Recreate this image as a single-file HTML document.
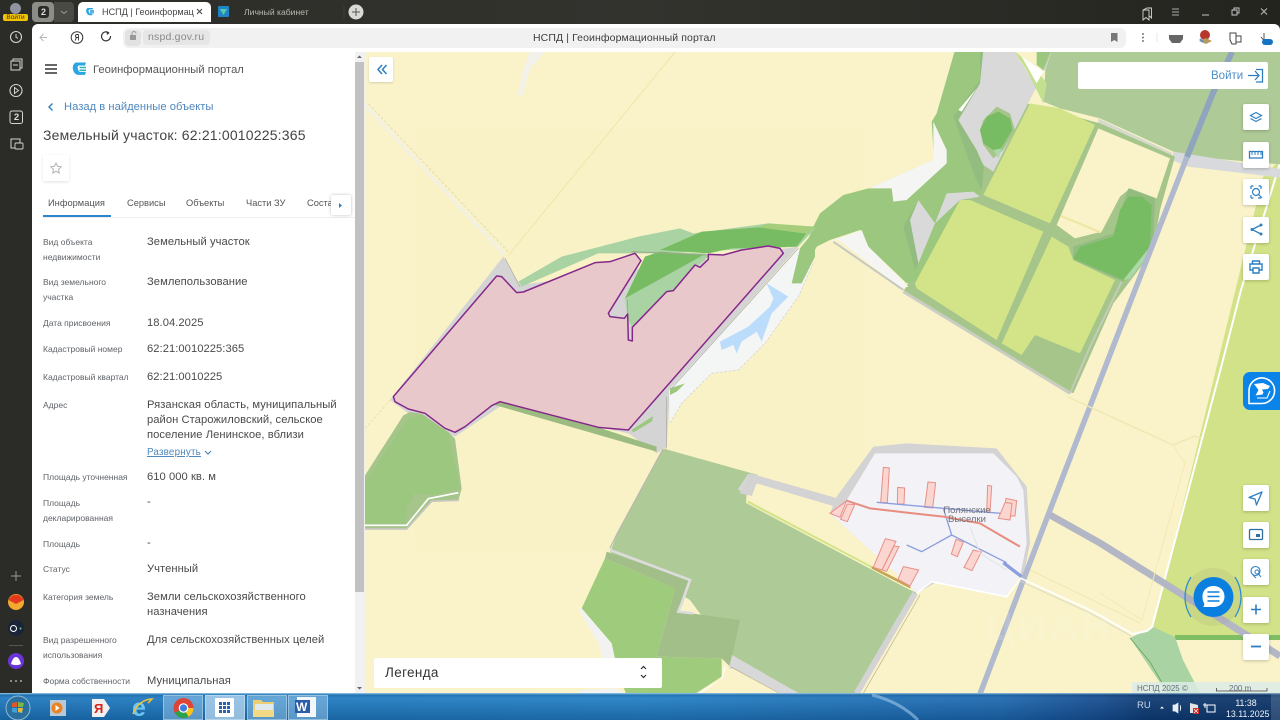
<!DOCTYPE html>
<html lang="ru"><head><meta charset="utf-8"><title>НСПД | Геоинформационный портал</title>
<style>
html,body{margin:0;padding:0;width:1280px;height:720px;overflow:hidden;background:#2b2b28}
body{font-family:"Liberation Sans","Noto Sans CJK SC",sans-serif;position:relative}
#w{position:absolute;left:0;top:0;width:1280px;height:720px;overflow:hidden;filter:blur(.35px)}
.a{position:absolute;white-space:nowrap}
.l{position:absolute;left:43px;font-size:8.5px;line-height:15px;color:#5f6368;letter-spacing:0;white-space:nowrap}
.v{position:absolute;left:147px;font-size:11.2px;line-height:15px;color:#4a4a4a;letter-spacing:.05px;white-space:nowrap}
.b{position:absolute;left:1243px;width:26px;height:26px;background:#fff;border-radius:2px;box-shadow:0 1px 3px rgba(0,0,0,.22)}
.t{position:absolute;font-size:9.3px;color:#555;white-space:nowrap}
svg{position:absolute;left:0;top:0;overflow:visible}
</style></head><body><div id="w">

<!-- window chrome -->
<div class="a" style="left:0;top:0;width:1280px;height:24px;background:linear-gradient(90deg,#2c2c28,#33332e 50%,#24241f)"></div>
<div class="a" style="left:0;top:0;width:32px;height:694px;background:#2b2b27"></div>
<div class="a" style="left:32px;top:2px;width:22px;height:20px;background:#8d8d88;border-radius:4px"></div>
<div class="a" style="left:54px;top:2px;width:20px;height:20px;background:#4a4a45;border-radius:0 4px 4px 0"></div>
<div class="a" style="left:38px;top:6px;width:11px;height:12px;background:#2b2b28;border-radius:3px;color:#ddd;font-size:9px;font-weight:bold;line-height:12px;text-align:center">2</div>
<div class="a" style="left:78px;top:2px;width:133px;height:20px;background:#fff;border-radius:5px 5px 0 0"></div>
<div class="a" style="left:102px;top:6px;width:92px;overflow:hidden;font-size:9.1px;line-height:12px;color:#444">НСПД | Геоинформаци</div>
<div class="a" style="left:244px;top:6px;font-size:8.6px;line-height:12px;color:#b9b9b2">Личный кабинет</div>
<div class="a" style="left:3px;top:14px;width:25px;height:7px;background:#f2c300;border-radius:2px;color:#333;font-size:6.5px;line-height:7px;text-align:center">Войти</div>
<div class="a" style="left:10px;top:3px;width:11px;height:11px;background:#8f94a0;border-radius:50%"></div>

<!-- address bar -->
<div class="a" style="left:32px;top:24px;width:1248px;height:28px;background:#fff;border-radius:6px 6px 0 0"></div>
<div class="a" style="left:123px;top:28px;width:1003px;height:20px;background:#f1f1f1;border-radius:6px"></div>
<div class="a" style="left:125px;top:30px;width:16px;height:16px;background:#e2e2e2;border-radius:4px"></div>
<div class="a" style="left:143px;top:30px;width:67px;height:15px;background:#e6e6e6;border-radius:4px"></div>
<div class="a" style="left:148px;top:31px;font-size:10.5px;line-height:13px;color:#8a8a8a;letter-spacing:.2px">nspd.gov.ru</div>
<div class="a" style="left:533px;top:32px;font-size:10.5px;line-height:13px;color:#3d3d3d;letter-spacing:.1px">НСПД | Геоинформационный портал</div>

<!-- map -->
<svg width="1280" height="720" viewBox="0 0 1280 720" style="left:0;top:0">
<defs><clipPath id="m"><rect x="365" y="52" width="915" height="642"/></clipPath></defs>
<g clip-path="url(#m)">
<rect x="365" y="52" width="915" height="642" fill="#faf3c9"/>
<rect x="415" y="130" width="450" height="420" fill="#f9f2c6"/>

<!-- right green area -->
<polygon points="1263,177 1150,640 1280,640 1280,160" fill="#d2e288"/>
<rect x="1175" y="635" width="105" height="5" fill="#7fbe63"/>
<polygon points="1155,635 1175,638 1175,641 1155,638" fill="#f8f3cf"/>
<polygon points="1130,638 1153,627 1175,637 1183,660 1200,693 1167,693" fill="#a9d3a3"/>
<polyline points="1130,638 1150,662 1168,693" fill="none" stroke="#6da35f" stroke-width=".8"/>
<polyline points="1280,163 1241,290 1223,360 1152,627 1147,631 1133,634" fill="none" stroke="#fff" stroke-width="2"/>

<!-- fields & forest, coordinates of crop 7 -->
<g transform="translate(780,50) scale(.33333)">
<polygon points="800,0 1700,0 1700,360 1230,320 1180,305 960,205 840,175 790,155" fill="#aeca96"/>
<polygon points="1180,305 1225,312 1640,380 1640,400 1225,350 1175,330" fill="#d7d9dc"/>
<polyline points="810,0 790,60" fill="none" stroke="#d0d5ca" stroke-width="12"/>
<polygon points="955,205 1175,308 1175,320 955,225" fill="#d5dacb"/>
<polygon points="740,160 960,220 1185,320 1140,480 1120,600 1000,760 880,1030 370,725 540,430" fill="#a6c58b"/>
<polyline points="370,725 870,1030" fill="none" stroke="#c9cdc2" stroke-width="9"/>
<polyline points="1025,695 930,890 870,1030" fill="none" stroke="#c4cbb8" stroke-width="6"/>
<polygon points="955,235 1170,325 1130,445 1050,415 1020,440 965,545 885,565 830,525" fill="#faf3c9"/>
<polygon points="845,495 965,545 960,550 840,500" fill="#f0e7a6"/>
<polygon points="750,160 840,175 945,225 810,520 610,435" fill="#d2e487"/>
<polygon points="540,450 570,450 790,545 650,870 410,715 405,700 520,470" fill="#d2e487"/>
<polygon points="815,560 865,590 880,630 1005,690 900,910 765,855 725,915 665,880" fill="#d2e487"/>
<polygon points="1045,415 1125,445 1120,590 1030,695 880,630 880,590 1000,550" fill="#93bd80"/>
<polygon points="1045,440 1085,440 1115,465 1110,590 1030,690 880,625 900,590 1000,560 1020,480" fill="#77bc62"/>
<polygon points="1030,690 1110,590 1100,620 1050,685" fill="#a9d9a9"/>
<polygon points="525,0 470,190 455,215 462,330 265,415 190,435 120,490 100,530 30,700 55,705 110,590 150,570 240,540 265,590 380,700 410,690 540,450 600,440 610,350 535,220 600,100 610,0" fill="#9cc77e"/>
<polygon points="610,0 700,0 770,110 640,365 610,345 590,300 535,210 600,100" fill="#d9d9d9"/>
<polygon points="600,0 610,0 600,100 535,210 590,300 612,350 605,420 585,380 520,200 600,90" fill="#93bd80"/>
<polygon points="770,0 815,0 790,60 770,45" fill="#9cc77e"/>
<polygon points="700,0 770,60 800,100 790,160 740,60" fill="#c3e08f"/>
<polygon points="725,20 790,65 770,100" fill="#fff"/>
<polygon points="600,240 610,210 650,170 690,190 705,240 670,300 640,325 610,285" fill="#a6c58b"/>
<polygon points="600,240 620,200 655,185 690,205 697,240 660,300 640,300 610,280" fill="#77bc62"/>
<polygon points="640,300 665,295 655,325" fill="#a9d9a9"/>
<polygon points="415,450 465,520 415,640 395,540 390,510" fill="#d9d9d9"/>
<polygon points="415,450 390,510 415,640 405,660 370,530" fill="#93bd80"/>
<polygon points="500,430 580,425 600,440 540,450 465,520" fill="#d9d9d9"/>
<polygon points="460,215 500,300 500,340 380,450 340,455 335,415 265,415 460,330" fill="#f5f5f3"/>
<polygon points="150,575 245,540 265,590 385,710 365,715 175,570" fill="#f5f5f3"/>
<polygon points="535,180 590,115 545,185" fill="#fff"/>
<polyline points="160,575 370,720" fill="none" stroke="#c6c8c0" stroke-width="6"/>
</g>

<!-- parcel zone, crop coordinates origin 365,52 -->
<g transform="translate(365,52) scale(.33333)">
<polyline points="0,160 420,610" fill="none" stroke="#f3f1e2" stroke-width="10"/>
<polyline points="10,155 430,600" fill="none" stroke="#d8d3b0" stroke-width="2" stroke-dasharray="8 6"/>
<polyline points="930,0 430,610" fill="none" stroke="#efe6a8" stroke-width="3"/>
<polyline points="75,1045 0,1130" fill="none" stroke="#e8e2b8" stroke-width="3" stroke-dasharray="8 5"/>
<polygon points="495,0 540,0 495,50 472,130 458,130 475,50" fill="#f3f2ea"/>
</g>
<g transform="translate(365,220) scale(.33333)">
<polygon points="75,540 415,110 465,195 1300,80 915,510 905,680 875,700 790,640 405,560 270,650 130,580" fill="#d4d4d4"/>
<polyline points="420,115 465,200" fill="none" stroke="#a9a99e" stroke-width="2"/>
<polygon points="460,185 590,110 820,50 945,25 985,40 1210,10 1350,25 1300,80 880,100 700,100 470,200" fill="#a9d3a3"/>
<polygon points="885,90 1010,35 1180,22 1325,40 1295,80 1100,85 1030,100" fill="#77bc62"/>
<polygon points="1210,10 1350,20 1330,42 1180,22" fill="#a5cd7c"/>
<polygon points="1300,85 1345,130 1300,230 1200,370 1120,450 1040,460 950,550 915,610 912,510" fill="#f4f5f5"/>
<polyline points="1345,130 1300,230 1200,370 1120,450 1040,460 950,550 915,610" fill="none" stroke="#cfcfc4" stroke-width="2" stroke-dasharray="8 5"/>
<polygon points="1205,190 1270,230 1220,280 1195,350 1190,365 1175,335 1130,365 1115,400 1105,375 1070,390 1065,365 1150,320 1215,260 1225,235" fill="#bcdcfb"/>
<polygon points="1305,85 1350,30 1350,110 1310,190 1280,190" fill="#9cc77e"/>
<polygon points="915,505 960,490 935,515 915,525" fill="#9cc77e"/>
<polygon points="800,630 865,588 860,605 805,637" fill="#9cc77e"/>
<polygon points="390,555 405,545 700,622 875,680 875,695" fill="#9cbb80"/>
<polyline points="905,530 905,680 880,720" fill="none" stroke="#a9a99e" stroke-width="2"/>
<polyline points="1300,85 920,505" fill="none" stroke="#a9a99e" stroke-width="2"/>
<polygon points="780,235 840,110 885,95 1020,100 1030,110 1000,135 925,215 905,215 800,320 790,300" fill="#a9d3a3"/>
<polygon points="780,235 840,110 885,95 1015,105 880,180" fill="#77bc62"/>
<polyline points="800,95 1030,105" fill="none" stroke="#9ca88e" stroke-width="3"/>
<polyline points="788,240 788,350" fill="none" stroke="#8ba883" stroke-width="2"/>
</g>

<!-- main meadow: page coordinates -->
<polygon points="663,449 758,477 748,474 746,503 910,590 917,593 857,694 800,694 732,657 690,600 610,552 618,532" fill="#aeca96"/>
<polygon points="665,449 758,475 738,489 700,500" fill="#aeca96"/>
<polygon points="738,489 748,474 765,479 752,475 746,490 743,494" fill="#d6d6d6"/>
<polyline points="663,449 618,532 610,548" fill="none" stroke="#b8b8ae" stroke-width="1.200"/>

<!-- lower meadow detail, crop 10 coordinates -->
<g transform="translate(360,540) scale(.33333)">
<polygon points="735,55 945,145 890,350 1085,355 1085,410 1000,465 800,465 765,380 755,310 665,205" fill="#9fcb7d"/>
<polygon points="655,205 665,205 755,310 765,355 725,355 720,320" fill="#f2f2f0"/>
<polygon points="650,465 800,465 770,445 660,450" fill="#f2f2f0"/>
<polygon points="740,35 990,120 955,215 1140,240 1110,380 1085,355 890,350 945,145 735,55" fill="#a3bf89"/>
<polyline points="750,30 990,120 965,190 955,215 1000,220" fill="none" stroke="#dcdcdc" stroke-width="8"/>
<polyline points="1000,470 1085,420 1095,380" fill="none" stroke="#fff" stroke-width="4"/>
</g>
<polygon points="732,655 800,694 780,694 729,668" fill="#d8d8d8"/>
<polyline points="731,667 780,694" fill="none" stroke="#b8ae8e" stroke-width=".8"/>
<polygon points="726,676 732,668 780,694 700,694" fill="#faf3c9"/>

<!-- lower-left forest, origin 365,52 -->
<g transform="translate(365,52) scale(.33333)">
<polygon points="0,1270 115,1090 135,1080 170,1085 250,1140 270,1160 290,1310 280,1345 200,1345 125,1430 0,1430" fill="#a6c58b"/>
<polygon points="0,1290 130,1100 170,1088 250,1145 285,1310 200,1330 150,1322 125,1370 122,1415 0,1415" fill="#9cc77e"/>
<polygon points="150,1322 195,1335 130,1415 122,1415 125,1370" fill="#a6c58b"/>
<polyline points="0,1420 125,1420 190,1340 280,1322" fill="none" stroke="#fff" stroke-width="5"/>
<polyline points="0,1431 125,1431 200,1348 282,1345" fill="none" stroke="#c8c8c0" stroke-width="5"/>
</g>

<!-- parcel -->
<g transform="translate(365,220) scale(.33333)">
<polygon points="85,530 395,168 410,170 455,218 475,216 690,128 735,125 810,100 828,122 730,280 735,290 778,295 788,282 790,360 802,363 802,322 905,215 925,212 990,135 1005,142 1030,118 1030,103 1075,105 1130,90 1210,78 1245,85 1255,100 790,630 700,622 405,545 380,557 300,620 270,637 240,625 180,580 130,567 90,545" fill="#e9c8cc" stroke="#85288a" stroke-width="4.500" stroke-linejoin="round"/>
</g>

<!-- village, crop 6 coordinates -->
<g transform="translate(740,430) scale(.33333)">
<polygon points="0,190 30,130 310,210 270,250" fill="#d3d3d3"/>
<polygon points="50,160 320,240 510,470 30,212" fill="#faf3c9"/>
<polygon points="25,212 395,408 395,414 22,218" fill="#d2e487"/>
<polygon points="395,408 515,468 510,475 395,416" fill="#c3a552"/>
<polygon points="290,200 400,50 500,40 770,55 860,170 870,340 850,440 840,440 600,450 530,490 510,470 270,250" fill="#d3d3d3"/>
<polygon points="320,210 405,70 760,70 830,140 850,180 860,340 840,440 795,500 570,455 530,490 510,470 270,250" fill="#f3f3f7"/>
<polyline points="843,445 800,500 575,455 530,490" fill="none" stroke="#fff" stroke-width="5"/>
<polyline points="525,490 350,790" fill="none" stroke="#d3d3d3" stroke-width="18"/>
<polyline points="540,495 370,790" fill="none" stroke="#b8ae8e" stroke-width="2"/>
<g fill="#fbd5cf" stroke="#e88f88" stroke-width="3">
<polygon points="430,112 448,114 442,218 422,218"/>
<polygon points="473,172 494,174 492,222 472,222"/>
<polygon points="564,156 587,158 578,234 554,232"/>
<polygon points="743,166 755,168 750,248 740,246"/>
<polygon points="798,205 830,212 825,258 790,258"/>
<polygon points="795,218 816,220 810,270 775,265"/>
<polygon points="270,250 320,212 300,262"/>
<polygon points="322,222 344,224 322,275 302,268"/>
<polygon points="436,326 468,334 426,420 400,412"/>
<polygon points="462,348 477,350 440,424 426,420"/>
<polygon points="490,410 536,420 510,468 474,448"/>
<polygon points="648,328 670,336 652,380 634,372"/>
<polygon points="700,360 724,366 696,422 672,412"/>
</g>
<polyline points="410,217 610,235 780,250" fill="none" stroke="#8c9ede" stroke-width="4"/>
<polyline points="610,235 635,315 800,398" fill="none" stroke="#8c9ede" stroke-width="4"/>
<polyline points="500,345 545,365 635,315" fill="none" stroke="#8c9ede" stroke-width="4"/>
<polyline points="790,398 845,440" fill="none" stroke="#8c9ede" stroke-width="10"/>
<polyline points="690,290 720,370 800,420" fill="none" stroke="#e3e3e6" stroke-width="3"/>
<polyline points="320,212 390,235 520,250 610,260 720,280 840,350" fill="none" stroke="#e88d80" stroke-width="6"/>
</g>
<text x="967" y="513" font-size="9.500" fill="#70707a" text-anchor="middle" font-family="Liberation Sans">Полянские</text>
<text x="967" y="522" font-size="9.500" fill="#70707a" text-anchor="middle" font-family="Liberation Sans">Выселки</text>

<!-- roads -->
<polyline points="1232,52 1213,93 1187,157" fill="none" stroke="#8fa5bd" stroke-width="6"/>
<polyline points="1187,157 1135,290 1050,510 980,694" fill="none" stroke="#b1b9ce" stroke-width="5.500"/>
<polyline points="1050,515 1100,543 1280,656" fill="none" stroke="#b3b7c5" stroke-width="7"/>
<polyline points="1068,397 1173,445 1195,436 1201,438" fill="none" stroke="#f0e8b4" stroke-width="1.500"/>
<polyline points="1173,445 1185,463 1142,620 1100,593" fill="none" stroke="#f2e9b4" stroke-width="1"/>
<polyline points="1030,570 1140,623" fill="none" stroke="#f0e8b4" stroke-width="1.200"/>
<polyline points="1020,578 1090,610 1133,634" fill="none" stroke="#fff" stroke-width="1.600"/>
<polyline points="1020,581 1090,613 1131,636" fill="none" stroke="#d8d6c0" stroke-width=".8"/>
<text x="985" y="640" font-size="40" font-weight="bold" fill="#fff" opacity=".1" font-family="Liberation Sans" letter-spacing="3">ЦИАН</text>

<!-- scale -->
<rect x="1132" y="682" width="148" height="12" fill="#dcebe6" opacity=".85"/>
<text x="1137" y="691" font-size="8" fill="#607080" font-family="Liberation Sans">НСПД 2025 ©</text>
<text x="1229" y="691" font-size="8" fill="#607080" font-family="Liberation Sans">200 m</text>
<polyline points="1216.500,688 1216.500,691 1267,691 1267,688" fill="none" stroke="#444" stroke-width=".8"/>
</g>
</svg>

<!-- left panel -->
<div class="a" style="left:32px;top:52px;width:323px;height:642px;background:#fff"></div>
<div class="a" style="left:355px;top:52px;width:10px;height:642px;background:#f1f1f1"></div>
<div class="a" style="left:355px;top:62px;width:9px;height:530px;background:#c1c1c1"></div>
<svg width="1280" height="720"><path d="M357 58L359.500 55.500 362 58Z M357 687L359.500 689.500 362 687Z" fill="#666"/></svg>

<svg width="1280" height="720">
<path d="M45 65H57M45 69H57M45 73H57" stroke="#333" stroke-width="1.400"/>
<path d="M76.500 62.500h9.500l-1 3H79c-1.200 0-1.500 1.200-1.200 2.800.3 1.800 1 3.400 2.400 3.600h5.800l-1 3H78c-2.800-.4-4.800-3-5.200-6.400-.3-3 1.500-6 3.700-6z" fill="#2ba6e0"/>
<path d="M79.500 67.500h6.500M79.500 70.200h6.500" stroke="#31b3b8" stroke-width="1.500"/>
<path d="M52.500 103.500L49 107l3.500 3.500" fill="none" stroke="#2d7fc1" stroke-width="1.400"/>
</svg>
<div class="a" style="left:93px;top:63px;font-size:11.200px;line-height:15px;color:#555;letter-spacing:.02px">Геоинформационный портал</div>
<div class="a" style="left:64px;top:100px;font-size:11.200px;line-height:15px;color:#4e88bd;letter-spacing:.02px">Назад в найденные объекты</div>
<div class="a" style="left:43px;top:126px;font-size:14px;line-height:18px;color:#444;letter-spacing:.19px">Земельный участок: 62:21:0010225:365</div>
<div class="a" style="left:43px;top:155px;width:26px;height:26px;background:#fff;box-shadow:0 1px 3px rgba(0,0,0,.12);border-radius:2px"></div>
<svg width="1280" height="720"><path d="M56 163l1.600 3.300 3.600.5-2.600 2.500.6 3.600-3.200-1.700-3.200 1.700.6-3.600-2.600-2.500 3.600-.5z" fill="none" stroke="#b0b0b0" stroke-width="1"/></svg>
<div class="t" style="left:48px;top:198px">Информация</div>
<div class="t" style="left:127px;top:198px">Сервисы</div>
<div class="t" style="left:186px;top:198px">Объекты</div>
<div class="t" style="left:246px;top:198px">Части ЗУ</div>
<div class="t" style="left:307px;top:198px;width:47px;overflow:hidden">Состав</div>
<div class="a" style="left:43px;top:215px;width:68px;height:2px;background:#2d86cc"></div>
<div class="a" style="left:43px;top:217px;width:312px;height:1px;background:#eeeeee"></div>
<div class="a" style="left:331px;top:195px;width:20px;height:20px;background:#fff;box-shadow:0 0 3px rgba(0,0,0,.25);border-radius:2px"></div>
<svg width="1280" height="720"><path d="M339 203l3 2.500-3 2.500z" fill="#2d7fc1"/></svg>

<div class="l" style="top:235px">Вид объекта<br>недвижимости</div><div class="v" style="top:235px">Земельный участок</div>
<div class="l" style="top:275px">Вид земельного<br>участка</div><div class="v" style="top:275px">Землепользование</div>
<div class="l" style="top:316px">Дата присвоения</div><div class="v" style="top:316px">18.04.2025</div>
<div class="l" style="top:342px">Кадастровый номер</div><div class="v" style="top:342px">62:21:0010225:365</div>
<div class="l" style="top:370px">Кадастровый квартал</div><div class="v" style="top:370px">62:21:0010225</div>
<div class="l" style="top:398px">Адрес</div><div class="v" style="top:398px">Рязанская область, муниципальный<br>район Старожиловский, сельское<br>поселение Ленинское, вблизи</div>
<div class="a" style="left:147px;top:446px;font-size:9.800px;line-height:13px;color:#4e88bd;text-decoration:underline;letter-spacing:.2px">Развернуть</div>
<svg width="1280" height="720"><path d="M205 451l3 3 3-3" fill="none" stroke="#4e88bd" stroke-width="1.200"/></svg>
<div class="l" style="top:470px">Площадь уточненная</div><div class="v" style="top:470px">610 000 кв. м</div>
<div class="l" style="top:496px">Площадь<br>декларированная</div><div class="v" style="top:495px">-</div>
<div class="l" style="top:537px">Площадь</div><div class="v" style="top:536px">-</div>
<div class="l" style="top:562px">Статус</div><div class="v" style="top:562px">Учтенный</div>
<div class="l" style="top:590px">Категория земель</div><div class="v" style="top:590px">Земли сельскохозяйственного<br>назначения</div>
<div class="l" style="top:633px">Вид разрешенного<br>использования</div><div class="v" style="top:633px">Для сельскохозяйственных целей</div>
<div class="l" style="top:674px">Форма собственности</div><div class="v" style="top:674px">Муниципальная</div>

<!-- map controls -->
<div class="a" style="left:369px;top:57px;width:24px;height:25px;background:#fff;border-radius:2px;box-shadow:0 1px 2px rgba(0,0,0,.15)"></div>
<div class="a" style="left:1078px;top:62px;width:190px;height:27px;background:#fff;border-radius:2px"></div>
<div class="a" style="left:1211px;top:69px;font-size:11.500px;line-height:14px;color:#4f8dc6">Войти</div>
<div class="b" style="top:104px"></div><div class="b" style="top:142px"></div><div class="b" style="top:179px"></div><div class="b" style="top:217px"></div><div class="b" style="top:254px"></div>
<div class="b" style="top:485px"></div><div class="b" style="top:522px"></div><div class="b" style="top:559px"></div><div class="b" style="top:597px"></div><div class="b" style="top:634px"></div>
<div class="a" style="left:374px;top:658px;width:288px;height:30px;background:#fff;border-radius:2px"></div>
<div class="a" style="left:385px;top:665px;font-size:13.500px;line-height:16px;color:#333;letter-spacing:.35px">Легенда</div>
<div class="a" style="left:1243px;top:372px;width:37px;height:38px;background:#0b84ea;border-radius:7px 0 0 7px"></div>

<svg width="1280" height="720">
<path d="M382 65l-4 4.500 4 4.500M386.500 65l-4 4.500 4 4.500" fill="none" stroke="#2d7fc1" stroke-width="1.500"/>
<path d="M1248 75.500h11M1255 71l4 4.500-4 4.500M1256 69.500h6.500v12.500h-6.500" fill="none" stroke="#2d7fc1" stroke-width="1.300"/>
<path d="M1256 112.500l5.500 3-5.500 3-5.500-3zM1250.500 118.500l5.500 3 5.500-3" fill="none" stroke="#2d7fc1" stroke-width="1.200"/>
<rect x="1249.500" y="151.500" width="13" height="6.500" fill="none" stroke="#2d7fc1" stroke-width="1.300"/>
<path d="M1252 152v3M1255 152v3M1258 152v3M1261 152v3" stroke="#2d7fc1" stroke-width="1"/>
<path d="M1251 186h2.500M1251 186v3M1261 186h-2.500M1261 186v3M1251 198h2.500M1251 198v-3M1261 198h-3" stroke="#2d7fc1" stroke-width="1.200" fill="none"/>
<circle cx="1256" cy="192" r="3.500" fill="none" stroke="#2d7fc1" stroke-width="1.200"/><path d="M1258.500 194.500l3.500 3.500" stroke="#2d7fc1" stroke-width="1.200"/>
<path d="M1261 225l-9 4.500 9 4.500" fill="none" stroke="#2d7fc1" stroke-width="1.300"/><circle cx="1261" cy="225" r="1.500" fill="#2d7fc1"/><circle cx="1252" cy="229.500" r="1.500" fill="#2d7fc1"/><circle cx="1261" cy="234" r="1.500" fill="#2d7fc1"/>
<path d="M1252.500 264v-3h7v3M1252.500 270h-2.500v-6h12v6h-2.500M1253 268h6v5h-6z" fill="none" stroke="#2d7fc1" stroke-width="1.400"/>
<path d="M1262 492l-13 5.500 6 1.500 1.500 6z" fill="none" stroke="#2d7fc1" stroke-width="1.300" stroke-linejoin="round"/>
<rect x="1249.500" y="529.500" width="13" height="10" rx="1" fill="none" stroke="#2f6f9f" stroke-width="1.300"/><rect x="1256" y="534" width="4" height="3" fill="#2f6f9f"/>
<circle cx="1255.500" cy="571" r="4.500" fill="none" stroke="#2d7fc1" stroke-width="1.100"/><circle cx="1257" cy="572" r="2" fill="none" stroke="#2d7fc1" stroke-width="1"/><path d="M1258.500 574l2.500 3M1253 575l3 3" stroke="#2d7fc1" stroke-width="1"/>
<path d="M1251 609.500h10M1256 604.500v10" stroke="#2d7fc1" stroke-width="1.600"/>
<path d="M1251 646.500h10" stroke="#2d7fc1" stroke-width="1.800"/>
<path d="M641 669l2.500-2.500 2.500 2.500M641 675l2.500 2.500 2.500-2.500" fill="none" stroke="#333" stroke-width="1.200"/>
<!-- dzen tab -->
<path d="M1249 403.500v-12.500a12.800 12.800 0 1 1 12.800 12.500z" fill="none" stroke="#fff" stroke-width="1.600"/>
<path d="M1254 384l9-1 7 3-2 3-6 .5 1.500 3-1 2-7 1 3-5.500z" fill="#fff"/><path d="M1257 398h10l3-7" fill="none" stroke="#fff" stroke-width="1.100"/>
<!-- chat -->
<circle cx="1213" cy="597" r="29" fill="#8a8a70" opacity=".12"/>
<path d="M1191 577c-8 12-8 28 0 40M1235 577c8 12 8 28 0 40" fill="none" stroke="#2f8fd0" stroke-width="1.300"/>
<circle cx="1213.500" cy="597" r="20" fill="#0a7fe0"/>
<path d="M1213.500 586c6.500 0 11 4.500 11 10.500s-4.500 10.500-11 10.500h-10.500c1.500-1.500 1.500-3 1-4-1.200-1.800-1.500-4-1.500-6.500 0-6 4.500-10.500 11-10.500z" fill="#fff"/>
<path d="M1207.500 592h12M1207.500 596.500h12M1207.500 601h12" stroke="#0a7fe0" stroke-width="1.500"/>

<!-- browser icons -->
<path d="M47 37.500h-6.500m3-3.500l-3.500 3.500 3.500 3.500" fill="none" stroke="#b8b8b8" stroke-width="1"/>
<circle cx="77" cy="37.500" r="5.800" fill="none" stroke="#333" stroke-width="1"/><path d="M78.500 34.500v6M78.500 37.500h-1.500c-2 0-2-3 0-3h1.500M76.500 37.500l-1.500 3" fill="none" stroke="#333" stroke-width=".9"/>
<path d="M110.500 36a4.500 4.500 0 1 1-1.500-3" fill="none" stroke="#333" stroke-width="1.200"/><path d="M106.500 31l3 2-2.500 2z" fill="#333"/>
<rect x="130" y="35" width="6" height="5" fill="#999"/><path d="M132 35v-1.500a2 2 0 0 1 4 0" fill="none" stroke="#999"/>
<path d="M1111 33h6.500v9l-3.250-2-3.250 2z" fill="#777"/>
<circle cx="1143" cy="34" r=".9" fill="#555"/><circle cx="1143" cy="37.500" r=".9" fill="#555"/><circle cx="1143" cy="41" r=".9" fill="#555"/>
<path d="M1157 33v9" stroke="#e8e8e8"/>
<path d="M1169 35h14v4l-3 4h-8l-3-4z" fill="#666"/>
<circle cx="1205" cy="35" r="5" fill="#b8372c"/><path d="M1199 41l7-3 6 3-6 3z" fill="#b99a5e"/><path d="M1200 39l3 3" stroke="#5b8fc8" stroke-width="2"/>
<path d="M1230 33h6v11h-4l-2-4zM1236 36h5v6h-5" fill="none" stroke="#444" stroke-width="1"/>
<path d="M1264 33v8M1261 37l2.500 3" stroke="#444" stroke-width=".9"/><rect x="1262" y="39" width="11" height="6" rx="3" fill="#1573c4"/>
<!-- title bar icons -->
<path d="M1143 10l4-2h4.500v10l-2-2M1143 10h6v10l-3-2.500-3 2.500z" fill="none" stroke="#d5d5d0" stroke-width=".9"/>
<path d="M1172 9h7M1172 12h7M1172 15h7" stroke="#aaa" stroke-width="1"/>
<path d="M1202 15h7" stroke="#aaa" stroke-width="1.200"/>
<path d="M1232 10h5v5h-5zM1234 10V8h5v5h-2" fill="none" stroke="#ccc" stroke-width=".9"/>
<path d="M1261 8.500l6 6M1267 8.500l-6 6" stroke="#bbb" stroke-width="1"/>
<!-- tab bar -->
<path d="M61 11l3 2.500 3-2.500" fill="none" stroke="#999" stroke-width="1"/>
<path d="M88 8h5l-.5 1.500h-3c-.8 0-1 .8-.8 1.800.2 1.300.7 2.200 1.700 2.400h2.200l-.5 1.500h-2.500c-2-.3-3.200-2-3.400-4-.2-1.600.5-3.200 1.800-3.200z" fill="#29a4e0"/>
<rect x="90" y="10" width="4" height="3.500" fill="#52b7e8"/>
<path d="M197 9l5 5M202 9l-5 5" stroke="#444" stroke-width="1"/>
<rect x="218" y="6" width="11" height="11" rx="1" fill="#1e86c8"/><path d="M220 9h7l-3.500 6z" fill="#5ac7a6"/>
<circle cx="356" cy="12" r="7.500" fill="#d9d9d6"/><path d="M352 12h8M356 8v8" stroke="#555" stroke-width="1"/>
<path d="M344 6v12" stroke="#3f3f3b"/>
<!-- side icons -->
<circle cx="16" cy="37" r="5.500" fill="none" stroke="#d5d5d0" stroke-width="1.100"/><path d="M16 34v3.300l2 1" fill="none" stroke="#d5d5d0" stroke-width="1"/>
<path d="M11 61h9v9h-9zM13 61v-2h9v9h-2M13 65h5" fill="none" stroke="#d5d5d0" stroke-width="1"/>
<circle cx="16" cy="90.500" r="6" fill="none" stroke="#d5d5d0" stroke-width="1.100"/><path d="M14.500 87.500l4 3-4 3z" fill="none" stroke="#d5d5d0" stroke-width="1"/>
<rect x="10" y="111" width="12.500" height="12.500" rx="2" fill="none" stroke="#d5d5d0" stroke-width="1"/>
<path d="M11 139h9v9h-9z" fill="none" stroke="#d5d5d0" stroke-width="1"/><rect x="15" y="143" width="8" height="6" rx="1" fill="#2b2b27" stroke="#d5d5d0" stroke-width=".9"/>
<path d="M16 571v10M11 576h10" stroke="#999" stroke-width="1"/>
<circle cx="16" cy="602" r="8" fill="#f2a92e"/><path d="M8.500 600a8 8 0 0 1 15 0l-7.500 4z" fill="#e5391e"/>
<circle cx="16" cy="628" r="8" fill="#1a2438"/><circle cx="13.500" cy="628.500" r="3" fill="none" stroke="#fff" stroke-width="1"/><circle cx="20.500" cy="628.500" r="1" fill="#66d0a0"/>
<path d="M9 645.500h14" stroke="#555"/>
<circle cx="16" cy="661" r="8" fill="#6a35d8"/><path d="M11 664c1-4 3-7 5-7s4 3 5 7c-3 1.500-7 1.500-10 0z" fill="#fff"/>
<circle cx="11" cy="681" r="1" fill="#aaa"/><circle cx="16" cy="681" r="1" fill="#aaa"/><circle cx="21" cy="681" r="1" fill="#aaa"/>
</svg>
<div class="a" style="left:10px;top:111px;width:13px;text-align:center;font-size:9.500px;font-weight:bold;line-height:13px;color:#ddd">2</div>

<!-- taskbar -->
<div class="a" style="left:0;top:693px;width:1280px;height:27px;background:linear-gradient(90deg,#1f78bd 0,#2480c4 50%,#1f6ab0 78%,#174e90 86%,#0f3a70 90%,#0e3568 100%)"></div>
<div class="a" style="left:0;top:693px;width:1280px;height:27px;background:linear-gradient(rgba(190,230,250,.75) 0,rgba(40,60,90,.15) 2px,rgba(255,255,255,.06) 5px,rgba(0,30,70,.25) 100%)"></div>
<svg width="1280" height="720"><path d="M872 695Q900 702 918 720" fill="none" stroke="#a8d0ee" stroke-width="3" opacity=".55"/></svg>
<div class="a" style="left:163px;top:695px;width:40px;height:25px;background:rgba(170,210,240,.45);border:1px solid rgba(210,235,250,.45);box-sizing:border-box"></div>
<div class="a" style="left:205px;top:695px;width:40px;height:25px;background:rgba(200,225,245,.7);border:1px solid rgba(210,235,250,.5);box-sizing:border-box"></div>
<div class="a" style="left:247px;top:695px;width:40px;height:25px;background:rgba(170,210,240,.45);border:1px solid rgba(210,235,250,.45);box-sizing:border-box"></div>
<div class="a" style="left:288px;top:695px;width:40px;height:25px;background:rgba(170,210,240,.45);border:1px solid rgba(210,235,250,.45);box-sizing:border-box"></div>
<svg width="1280" height="720">
<circle cx="18" cy="708" r="12" fill="#2a6f9e" stroke="#8db9d4" stroke-width="1"/>
<path d="M12 703l5-1v5h-5z" fill="#e0562a"/><path d="M18 702l6 1-1 4h-5z" fill="#7cb642"/><path d="M12 708h5v5l-5-1z" fill="#3f9fd8"/><path d="M18 708h5l-1 5-4-1z" fill="#e8b83a"/>
<rect x="50" y="700" width="16" height="16" fill="#b9c8d5"/><circle cx="57" cy="708" r="5.500" fill="#ea8220"/><path d="M55.500 705l4 3-4 3z" fill="#fff"/>
<path d="M92 699h12l6 9-6 9H92z" fill="#f0f0f0"/><text x="94" y="713" font-size="13" font-weight="bold" fill="#d6241a" font-family="Liberation Sans">Я</text>
<text x="132" y="716" font-size="25" font-weight="bold" fill="#6cc6f2" font-family="Liberation Sans">e</text><path d="M133 714c3-9 11-15 19-15-2 2-3 3-4 4" fill="none" stroke="#f0c33c" stroke-width="1.500"/>
<circle cx="183.500" cy="708" r="10" fill="#de4536"/><path d="M183.500 708l-8.700 5a10 10 0 0 0 13.700 3.700z" fill="#2ba24c"/><path d="M183.500 708h10a10 10 0 0 1-5 8.700l-5-8.700z" fill="#f9c521"/><circle cx="183.500" cy="708" r="4.800" fill="#fff"/><circle cx="183.500" cy="708" r="3.600" fill="#3d7de3"/>
<rect x="215" y="698" width="19" height="19" rx="1" fill="#fff"/>
<g fill="#2764b0"><rect x="219" y="702" width="3" height="3"/><rect x="223" y="702" width="3" height="3"/><rect x="227" y="702" width="3" height="3"/><rect x="219" y="706" width="3" height="3"/><rect x="223" y="706" width="3" height="3"/><rect x="227" y="706" width="3" height="3"/><rect x="219" y="710" width="3" height="3"/><rect x="223" y="710" width="3" height="3"/><rect x="227" y="710" width="3" height="3"/></g>
<path d="M253 700h8l2 2h11v14h-21z" fill="#edcf73"/><rect x="255" y="704" width="18" height="8" fill="#dfe9ee"/><path d="M253 710h21v7h-21z" fill="#f2d986"/>
<rect x="297" y="697" width="19" height="20" fill="#f3f6fb"/><rect x="295" y="700" width="15" height="13" fill="#2b5caa"/>
<text x="296" y="711" font-size="12" font-weight="bold" fill="#fff" font-family="Liberation Sans">W</text>
<path d="M1160 708.500l2-2 2 2z" fill="#fff"/>
<path d="M1173 705h2l3-2v10l-3-2h-2zM1180 705c1 2 1 4 0 6" fill="#e7eef5" stroke="#e7eef5" stroke-width=".7"/>
<path d="M1190 703l8 2v8h-8z" fill="#e3e3e3"/><rect x="1193" y="708" width="6" height="6" fill="#cf2b2b"/><path d="M1194 709l4 4M1198 709l-4 4" stroke="#fff" stroke-width=".7"/>
<rect x="1207" y="705" width="8" height="7" fill="none" stroke="#fff"/><path d="M1205 703v5M1203 705h4" stroke="#fff"/>
<rect x="1271" y="694" width="9" height="26" fill="rgba(255,255,255,.14)"/>
</svg>
<div class="a" style="left:1137px;top:700px;font-size:9.500px;line-height:11px;color:#c6d6e6">RU</div>
<div class="a" style="left:1226px;top:698px;width:40px;text-align:center;font-size:8.800px;line-height:11px;color:#eef3f8">11:38<br>13.11.2025</div>
</div></body></html>
